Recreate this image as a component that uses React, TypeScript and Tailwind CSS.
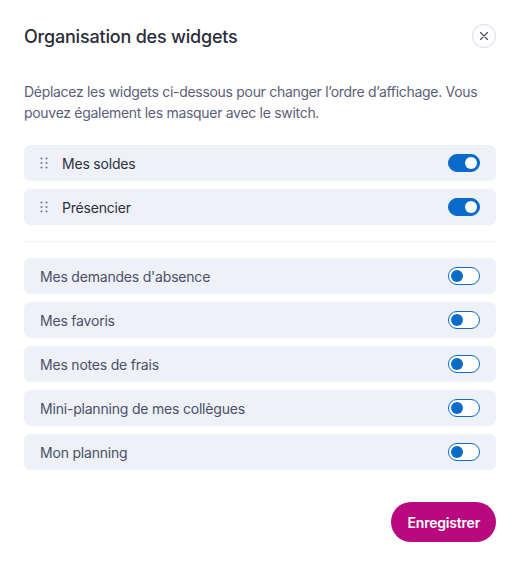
import { useState } from "react";

const VISIBLE = ["Mes soldes", "Présencier"];
const HIDDEN = [
  "Mes demandes d'absence",
  "Mes favoris",
  "Mes notes de frais",
  "Mini-planning de mes collègues",
  "Mon planning",
];

function Toggle({ on, onClick }: { on: boolean; onClick: () => void }) {
  return (
    <button
      type="button"
      role="switch"
      aria-checked={on}
      onClick={onClick}
      className={`relative w-[32px] h-[18px] rounded-full border-[1.5px] border-[#0b6bcb] flex items-center px-[2px] ${
        on ? "bg-[#0b6bcb] justify-end" : "bg-white justify-start"
      }`}
    >
      <span className={`w-[12px] h-[12px] rounded-full ${on ? "bg-white" : "bg-[#0b6bcb]"}`} />
    </button>
  );
}

function DragHandle() {
  return (
    <svg width="8" height="12" viewBox="0 0 8 12" className="shrink-0 text-[#7b8096]">
      {[1.5, 6, 10.5].map((y) =>
        [1.5, 6.5].map((x) => <circle key={`${x}-${y}`} cx={x} cy={y} r="1.1" fill="currentColor" />)
      )}
    </svg>
  );
}

export default function App() {
  const [state, setState] = useState<Record<string, boolean>>(() => {
    const s: Record<string, boolean> = {};
    VISIBLE.forEach((n) => (s[n] = true));
    HIDDEN.forEach((n) => (s[n] = false));
    return s;
  });
  const flip = (n: string) => setState((s) => ({ ...s, [n]: !s[n] }));

  return (
    <div className="w-[520px] h-[565px] bg-white px-6 pt-6 font-['Inter',sans-serif] tracking-[-0.2px]">
      <div className="flex items-center justify-between h-6">
        <h2 className="text-[18px] font-medium text-[#2a2d3a]">Organisation des widgets</h2>
        <button
          type="button"
          aria-label="Fermer"
          className="w-6 h-6 rounded-full border border-[#d6daec] flex items-center justify-center text-[#4a4d5a]"
        >
          <svg width="10" height="10" viewBox="0 0 10 10">
            <path d="M1.5 1.5l7 7M8.5 1.5l-7 7" stroke="currentColor" strokeWidth="1.1" strokeLinecap="round" />
          </svg>
        </button>
      </div>

      <p className="mt-[33px] text-[14px] leading-[21px] text-[#5b6078] tracking-[-0.3px]">
        Déplacez les widgets ci-dessous pour changer l’ordre d’affichage. Vous pouvez également les masquer avec le switch.
      </p>

      <div className="mt-[22px] flex flex-col gap-2">
        {VISIBLE.map((n) => (
          <div key={n} className="h-9 rounded-md bg-[#eef1f7] flex items-center pl-4 pr-4 gap-[14px]">
            <DragHandle />
            <span className="flex-1 text-[14px] text-[#2d3040]">{n}</span>
            <Toggle on={state[n]} onClick={() => flip(n)} />
          </div>
        ))}
      </div>

      <div className="my-4 h-px bg-[#eef0f4]" />

      <div className="flex flex-col gap-2">
        {HIDDEN.map((n) => (
          <div key={n} className="h-9 rounded-md bg-[#eef1f7] flex items-center px-4">
            <span className="flex-1 text-[14px] text-[#4b5068]">{n}</span>
            <Toggle on={state[n]} onClick={() => flip(n)} />
          </div>
        ))}
      </div>

      <div className="mt-8 flex justify-end">
        <button
          type="button"
          className="h-10 px-4 rounded-full bg-[#b8097e] text-white text-[14px] font-semibold"
        >
          Enregistrer
        </button>
      </div>
    </div>
  );
}
